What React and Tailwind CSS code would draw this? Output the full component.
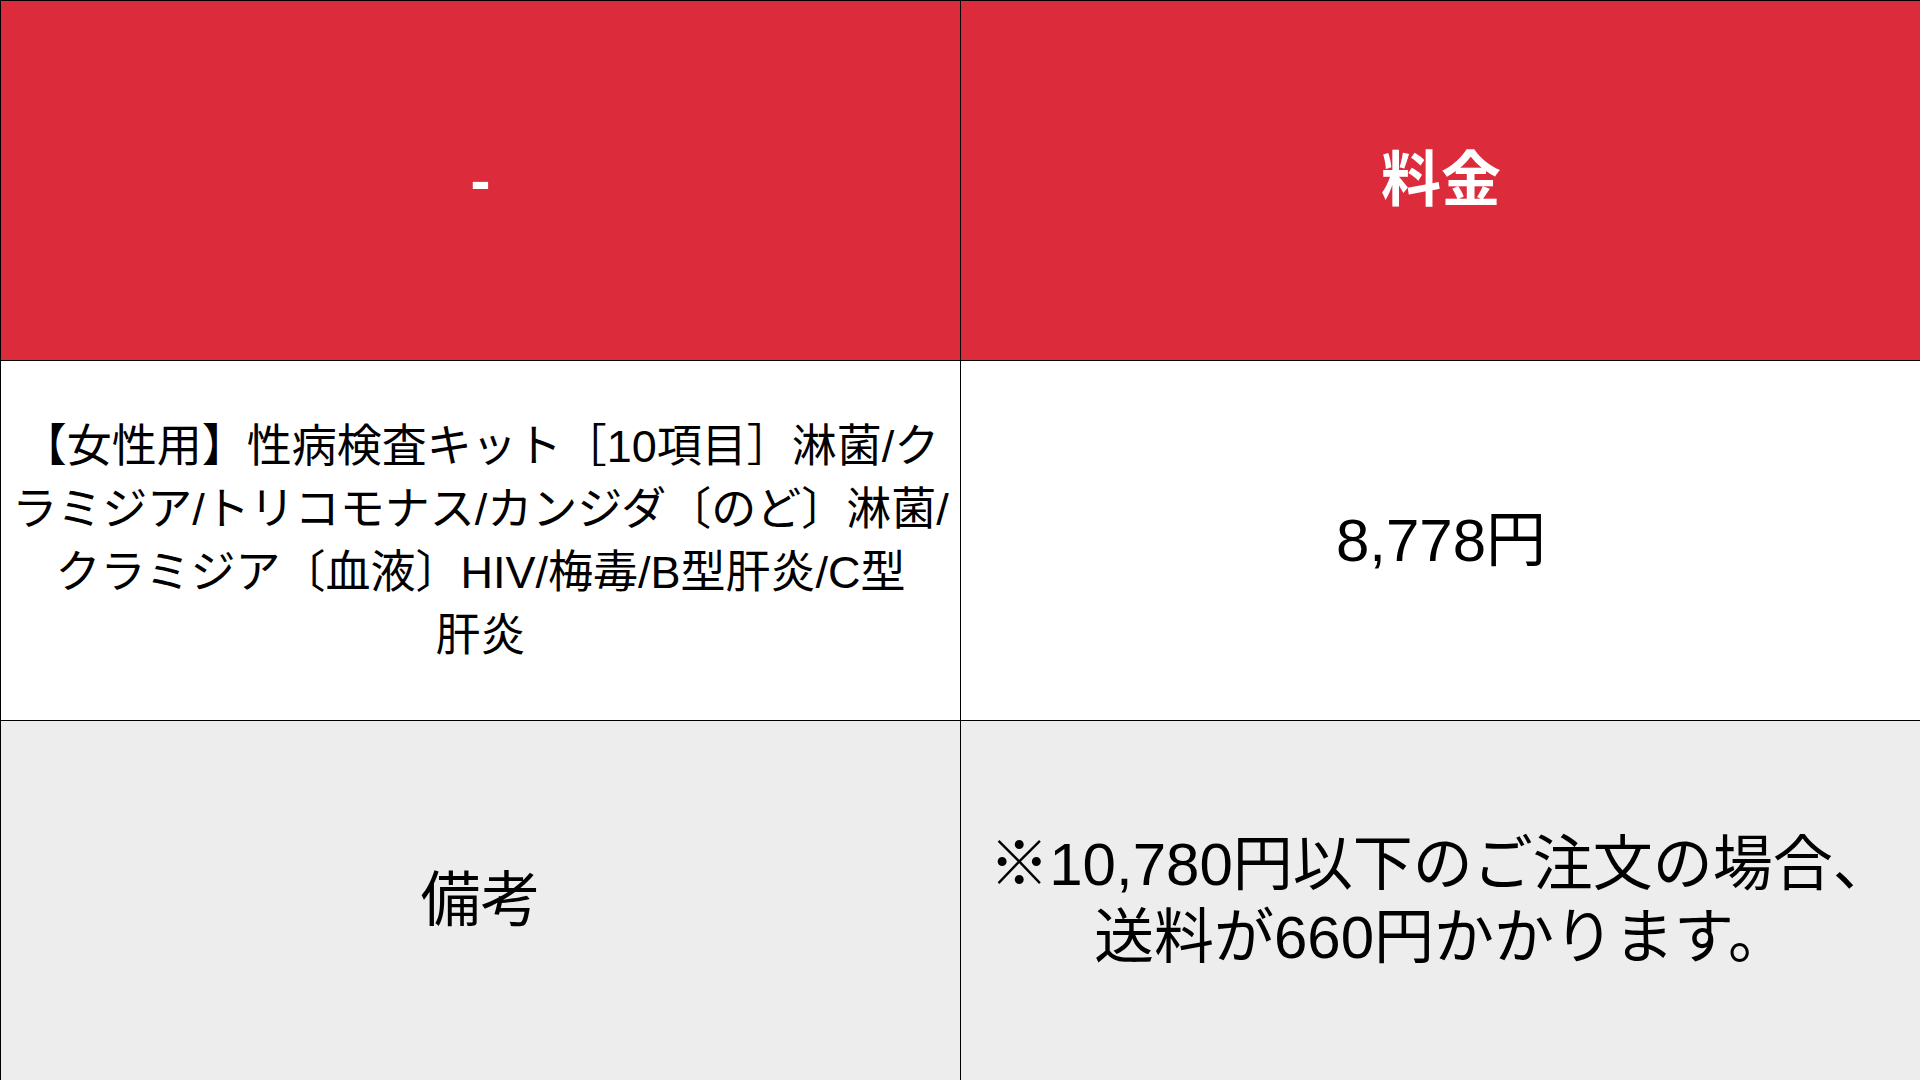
import React from 'react';

const font = { fontFamily: '"Liberation Sans", "Noto Sans CJK JP", sans-serif' };

const Cell = ({ children, className = '' }) => (
  <div className={`flex items-center justify-center text-center text-black ${className}`}>{children}</div>
);

export default function App() {
  return (
    <div className="w-[1920px] h-[1080px] overflow-hidden bg-white" style={font}>
      <div className="grid grid-cols-[960px_960px] grid-rows-[360px_360px_360px] border-t border-l border-black">
        <Cell className="bg-[#dc2b3b] border-r border-b border-black">
          <span className="text-[60px] font-bold text-white">-</span>
        </Cell>
        <Cell className="bg-[#dc2b3b] border-b border-black">
          <span className="text-[60px] font-bold text-white">料金</span>
        </Cell>

        <Cell className="bg-white border-r border-b border-black px-2">
          <p className="text-[45px] leading-[63px]">
            【女性用】性病検査キット［10項目］淋菌/ク<br />
            ラミジア/トリコモナス/カンジダ〔のど〕淋菌/<br />
            クラミジア〔血液〕HIV/梅毒/B型肝炎/C型<br />
            肝炎
          </p>
        </Cell>
        <Cell className="bg-white border-b border-black">
          <span className="text-[60px]">8,778円</span>
        </Cell>

        <Cell className="bg-[#ededed] border-r border-black">
          <span className="text-[60px]">備考</span>
        </Cell>
        <Cell className="bg-[#ededed]">
          <p className="text-[60px] leading-[73px]">
            ※10,780円以下のご注文の場合、<br />
            送料が660円かかります。
          </p>
        </Cell>
      </div>
    </div>
  );
}
